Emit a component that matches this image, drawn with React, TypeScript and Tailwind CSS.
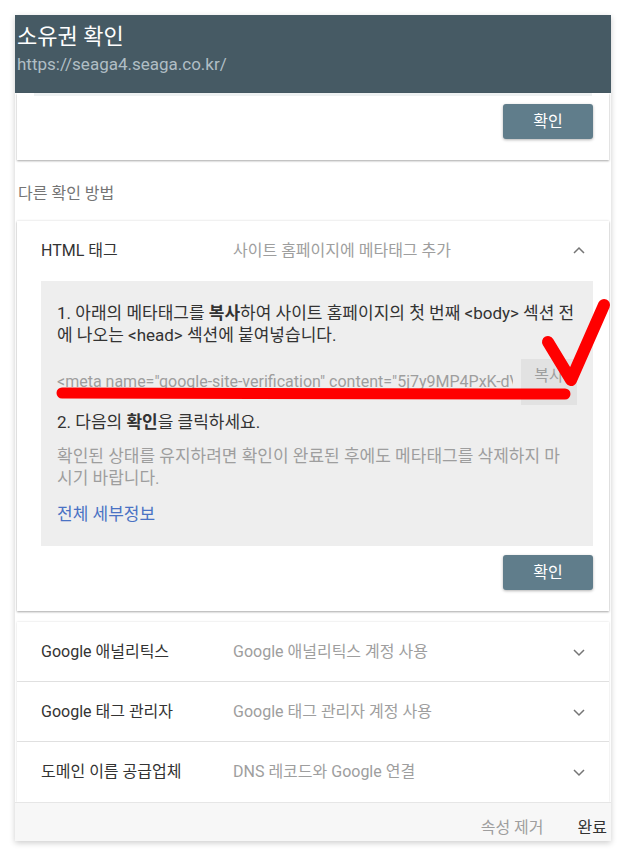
import React from "react";

const font = { fontFamily: 'Roboto, "Noto Sans CJK KR", sans-serif' };

function ChevronDown() {
  return (
    <svg width="14" height="10" viewBox="0 0 14 10" fill="none">
      <path d="M2 3 L7 8 L12 3" stroke="#757575" strokeWidth="1.5" />
    </svg>
  );
}
function ChevronUp() {
  return (
    <svg width="14" height="10" viewBox="0 0 14 10" fill="none">
      <path d="M2 7 L7 2 L12 7" stroke="#757575" strokeWidth="1.5" />
    </svg>
  );
}

function Row({ title, desc, last }: { title: string; desc: string; last?: boolean }) {
  return (
    <div className={`flex h-[60px] items-center pl-[24px] pr-[23px] ${last ? "" : "border-b border-[#e0e0e0]"}`}>
      <div className="w-[192px] text-[16px] text-[#333]">{title}</div>
      <div className="flex-1 text-[16px] text-[#9e9e9e]">{desc}</div>
      <ChevronDown />
    </div>
  );
}

export default function App() {
  return (
    <div className="relative min-h-[855px] w-[634px] bg-white" style={font}>
      <div className="pt-[15px] pl-[15px]">
        <div className="w-[596px] bg-white shadow-[0_2px_6px_rgba(0,0,0,0.2)]">
          {/* header */}
          <div className="h-[78px] bg-[#465a64] pl-[2px] pt-[6px]">
            <div className="text-[22px] leading-[32px] text-white">소유권 확인</div>
            <div className="text-[17px] leading-[22px] text-[#b0bec5]">https://seaga4.seaga.co.kr/</div>
          </div>
          <div className="px-[2px]">
            {/* card 1 */}
            <div className="bg-white shadow-[0_1px_2px_rgba(0,0,0,0.35)]">
              <div className="mx-[17px] h-[3px] bg-[#eef1f2]" />
              <div className="flex justify-end pr-[16px] pt-[8px] pb-[21px]">
                <button className="h-[35px] w-[90px] rounded-[3px] bg-[#607d8b] text-[16px] text-white shadow-[0_1px_3px_rgba(0,0,0,0.3)]">
                  확인
                </button>
              </div>
            </div>
            {/* other methods */}
            <div className="flex h-[61px] items-center pl-[1px] pt-[6px] text-[16px] text-[#757575]">다른 확인 방법</div>
            {/* expanded card */}
            <div className="bg-white shadow-[0_1px_2px_rgba(0,0,0,0.35),0_-1px_2px_rgba(0,0,0,0.05)]">
              <div className="flex h-[60px] items-center pl-[24px] pr-[23px]">
                <div className="w-[192px] text-[16px] text-[#333]">HTML 태그</div>
                <div className="flex-1 text-[16px] text-[#9e9e9e]">사이트 홈페이지에 메타태그 추가</div>
                <ChevronUp />
              </div>
              <div className="ml-[24px] mr-[16px] bg-[#eeeeee] px-[16px] pt-[21px] pb-[21px]">
                <p className="text-[17px] leading-[22px] text-[#333]">
                  1. 아래의 메타태그를 <b className="font-bold">복사</b>하여 사이트 홈페이지의 첫 번째 &lt;body&gt; 섹션 전에 나오는 &lt;head&gt; 섹션에 붙여넣습니다.
                </p>
                <div className="mt-[13px] flex h-[46px] items-center gap-[8px]">
                  <div className="flex-1 overflow-hidden whitespace-nowrap text-[16px] text-[#9e9e9e]">
                    &lt;meta name="google-site-verification" content="5j7y9MP4PxK-dVxQ3r8Lw" /&gt;
                  </div>
                  <div className="flex h-[46px] w-[56px] justify-center bg-[#e2e2e2] pt-[5px] text-[16px] text-[#9e9e9e]">
                    복사
                  </div>
                </div>
                <p className="mt-[6px] text-[17px] leading-[22px] text-[#333]">
                  2. 다음의 <b className="font-bold">확인</b>을 클릭하세요.
                </p>
                <p className="mt-[12px] pr-[12px] text-[17px] leading-[22px] text-[#9e9e9e]">
                  확인된 상태를 유지하려면 확인이 완료된 후에도 메타태그를 삭제하지 마시기 바랍니다.
                </p>
                <p className="mt-[14px] text-[17px] leading-[22px] text-[#4a72c4]">전체 세부정보</p>
              </div>
              <div className="flex justify-end pr-[16px] pt-[9px] pb-[21px]">
                <button className="h-[35px] w-[90px] rounded-[3px] bg-[#607d8b] text-[16px] text-white shadow-[0_1px_3px_rgba(0,0,0,0.3)]">
                  확인
                </button>
              </div>
            </div>
            {/* collapsed rows */}
            <div className="mt-[11px] bg-white shadow-[0_0_2px_rgba(0,0,0,0.15)]">
              <Row title="Google 애널리틱스" desc="Google 애널리틱스 계정 사용" />
              <Row title="Google 태그 관리자" desc="Google 태그 관리자 계정 사용" />
              <Row title="도메인 이름 공급업체" desc="DNS 레코드와 Google 연결" last />
            </div>
          </div>
          {/* footer */}
          <div className="flex h-[39px] items-end justify-end gap-[34px] border-t border-[#e6e6e6] bg-[#f7f7f7] pr-[4px] pb-[1px] text-[16px]">
            <span className="text-[#9e9e9e]">속성 제거</span>
            <span className="text-[#333]">완료</span>
          </div>
        </div>
      </div>
      {/* red annotation overlay */}
      <svg className="pointer-events-none absolute left-0 top-0" width="634" height="855" viewBox="0 0 634 855">
        <line x1="62" y1="393" x2="565" y2="394" stroke="#ff0000" strokeWidth="11" strokeLinecap="round" />
        <path d="M548 342 L571 380 L604 305" stroke="#ff0000" strokeWidth="12" strokeLinecap="round" strokeLinejoin="round" fill="none" />
      </svg>
    </div>
  );
}
